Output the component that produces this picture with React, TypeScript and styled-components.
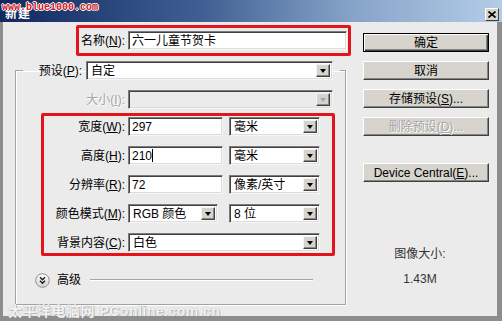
import React from "react";
import styled, { createGlobalStyle, css } from "styled-components";

const GlobalStyle = createGlobalStyle`
  html, body { margin: 0; padding: 0; background: #fff; }
  body {
    font-family: "Liberation Sans", "Noto Sans CJK SC", sans-serif;
    font-size: 12px;
    line-height: 14px;
    color: #000;
  }
  * { box-sizing: border-box; }
`;

const Window = styled.div`
  position: relative;
  width: 502px;
  height: 321px;
  overflow: hidden;
  display: flex;
  flex-direction: column;
  background: #ebebeb;
`;

const TitleBar = styled.div`
  height: 22px;
  flex: none;
  display: flex;
  align-items: flex-end;
  padding: 0 3px 1px 5px;
  background: linear-gradient(90deg, #10295e 0%, #3f5f92 40%, #86a3c8 70%, #b3cde8 100%);
`;

const Title = styled.span`
  align-self: center;
  margin-top: 6px;
  color: #fff;
  font-weight: bold;
  font-size: 12px;
  letter-spacing: 1px;
`;

const CloseButton = styled.span`
  margin-left: auto;
  width: 14px;
  height: 13px;
  background: #d6d3cc;
  border: 1px solid;
  border-color: #fff #404040 #404040 #fff;
  display: flex;
  align-items: center;
  justify-content: center;
`;

const TitleMark = styled.span`
  position: absolute;
  left: 2px;
  top: 1px;
  font-family: "Liberation Mono", monospace;
  font-weight: bold;
  font-size: 10px;
  color: #d4141c;
  text-shadow: 1px 0 0 #fff, -1px 0 0 #fff, 0 1px 0 #fff, 0 -1px 0 #fff;
`;

const FooterMark = styled.span`
  position: absolute;
  left: 8px;
  bottom: 2px;
  font-weight: bold;
  font-size: 14px;
  line-height: 16px;
  color: rgba(255, 255, 255, 0.9);
  text-shadow: 0 0 1px #9a9a9a, 1px 1px 0 rgba(140, 140, 140, 0.5);
  letter-spacing: 0.5px;
`;

const Frame = styled.div`
  flex: 1;
  display: flex;
  border-style: solid;
  border-color: #8d8d8d;
  border-width: 0 5px 5px 3px;
`;

const LeftPane = styled.div`
  width: 360px;
  flex: none;
  display: flex;
  flex-direction: column;
  align-items: flex-start;
`;

const RightPane = styled.div`
  flex: 1;
  display: flex;
  flex-direction: column;
  align-items: flex-start;
  padding-top: 11px;
  gap: 9px;
`;

const Highlight = styled.div<{ $ml: number; $mt: number; $w: number }>`
  margin: ${(p) => p.$mt}px 0 0 ${(p) => p.$ml}px;
  width: ${(p) => p.$w}px;
  border: 3px solid #e3141c;
  border-radius: 2px;
`;

const NameBox = styled(Highlight)`
  height: 31px;
  display: flex;
  align-items: center;
  gap: 3px;
`;

const FieldStack = styled(Highlight)`
  display: flex;
  flex-direction: column;
  gap: 10px;
  padding: 1px 0;
`;

const sunken = css`
  border: 1px solid;
  border-color: #7c7c7c #f6f6f6 #f6f6f6 #7c7c7c;
  box-shadow: inset 1px 1px 0 #404040, inset -1px -1px 0 #dcdcdc;
`;

const FieldRow = styled.div`
  display: flex;
  align-items: center;
  gap: 3px;
  height: 19px;
`;

const FieldPair = styled.div<{ $gap: number }>`
  display: flex;
  gap: ${(p) => p.$gap}px;
`;

const FieldLabel = styled.span<{ $w: number; $disabled?: boolean }>`
  width: ${(p) => p.$w}px;
  flex: none;
  text-align: right;
  white-space: nowrap;
  color: ${(p) => (p.$disabled ? "#a5a5a5" : "#000")};
  text-shadow: ${(p) => (p.$disabled ? "1px 1px 0 #fff" : "none")};
`;

const Key = styled.span`
  text-decoration: underline;
  text-underline-offset: 1px;
`;

const TextBox = styled.div<{ $w: number }>`
  ${sunken};
  width: ${(p) => p.$w}px;
  height: 19px;
  flex: none;
  background: #fff;
  padding: 0 3px;
  display: flex;
  align-items: center;
  white-space: nowrap;
`;

const Caret = styled.span`
  width: 1px;
  height: 13px;
  background: #000;
`;

const SelectBox = styled.div<{ $w: number; $disabled?: boolean }>`
  ${sunken};
  width: ${(p) => p.$w}px;
  height: 19px;
  flex: none;
  display: flex;
  padding: 2px;
  background: ${(p) => (p.$disabled ? "#ebebeb" : "#fff")};
`;

const SelectValue = styled.span`
  flex: 1;
  min-width: 0;
  display: flex;
  align-items: center;
  padding-left: 2px;
  white-space: nowrap;
`;

const ArrowButton = styled.span<{ $disabled?: boolean }>`
  width: 14px;
  flex: none;
  background: #d6d3cc;
  border: 1px solid;
  border-color: #f4f4f4 #404040 #404040 #f4f4f4;
  box-shadow: inset -1px -1px 0 #8a8a8a;
  display: flex;
  align-items: center;
  justify-content: center;

  &::after {
    content: "";
    border-left: 3.5px solid transparent;
    border-right: 3.5px solid transparent;
    border-top: 4px solid ${(p) => (p.$disabled ? "#a8a8a8" : "#000")};
  }
`;

const GroupBox = styled.fieldset`
  margin: 5px 0 0 12px;
  width: 331px;
  min-inline-size: 0;
  padding: 0 0 17px 0;
  border: 1px solid #a3a3a3;
  box-shadow: 1px 1px 0 #fff, inset 1px 1px 0 #fff;
`;

const GroupLegend = styled.legend`
  margin-left: 7px;
  padding: 0 7px 0 12px;
`;

const LegendRow = styled.div`
  display: flex;
  align-items: center;
  gap: 4px;
  height: 19px;
`;

const SizeRow = styled(FieldRow)`
  margin-top: 10px;
  margin-bottom: 4px;
`;

const AdvancedRow = styled.div`
  margin: 17px 32px 0 19px;
  height: 14px;
  display: flex;
  align-items: center;
  gap: 7px;
`;

const Rule = styled.span`
  flex: 1;
  margin-left: 2px;
  height: 2px;
  border-top: 1px solid #a3a3a3;
  border-bottom: 1px solid #fff;
`;

const DialogButton = styled.button<{ $default?: boolean; $mt?: number }>`
  width: 126px;
  height: 19px;
  margin-top: ${(p) => p.$mt ?? 0}px;
  padding: 0;
  font: inherit;
  font-size: 12px;
  line-height: 14px;
  color: #000;
  background: #d7d4cd;
  border: 1px solid;
  border-color: #fff #404040 #404040 #fff;
  box-shadow: inset -1px -1px 0 #858585;
  white-space: nowrap;

  ${(p) =>
    p.$default &&
    css`
      border-color: #000;
      box-shadow: inset 1px 1px 0 #fff, inset -1px -1px 0 #404040, inset -2px -2px 0 #858585;
    `}

  &:disabled {
    color: #a5a5a5;
    text-shadow: 1px 1px 0 #fff;
  }
`;

const InfoBlock = styled.div`
  margin-top: 56px;
  width: 114px;
  display: flex;
  flex-direction: column;
  align-items: center;
  gap: 11px;
  color: #333;
`;

const AdvancedIcon = () => (
  <svg width="15" height="15" viewBox="0 0 15 15">
    <defs>
      <linearGradient id="advFill" x1="0" y1="0" x2="0" y2="1">
        <stop offset="0" stopColor="#ffffff" />
        <stop offset="1" stopColor="#d2d2d2" />
      </linearGradient>
    </defs>
    <circle cx="7.5" cy="7.5" r="6.8" fill="url(#advFill)" stroke="#8c8c8c" />
    <path d="M5 4.2 L7.5 6.7 L10 4.2 M5 7.8 L7.5 10.3 L10 7.8" fill="none" stroke="#1a1a1a" strokeWidth="1.4" />
  </svg>
);

const Select = ({ w, value, disabled }: { w: number; value?: string; disabled?: boolean }) => (
  <SelectBox $w={w} $disabled={disabled}>
    <SelectValue>{value}</SelectValue>
    <ArrowButton $disabled={disabled} />
  </SelectBox>
);

const Label = ({ w, text, k, disabled }: { w: number; text: string; k: string; disabled?: boolean }) => (
  <FieldLabel $w={w} $disabled={disabled}>
    {text}(<Key>{k}</Key>):
  </FieldLabel>
);

export default function App() {
  return (
    <Window>
      <GlobalStyle />
      <TitleBar>
        <Title>新建</Title>
        <CloseButton>
          <svg width="8" height="7" viewBox="0 0 8 7">
            <path d="M0.5 0.5 L7.5 6.5 M7.5 0.5 L0.5 6.5" stroke="#000" strokeWidth="1.6" />
          </svg>
        </CloseButton>
      </TitleBar>
      <Frame>
        <LeftPane>
          <NameBox $ml={73} $mt={3} $w={275}>
            <Label w={46} text="名称" k="N" />
            <TextBox $w={219}>六一儿童节贺卡</TextBox>
          </NameBox>

          <GroupBox>
            <GroupLegend>
              <LegendRow>
                <Label w={47} text="预设" k="P" />
                <Select w={247} value="自定" />
              </LegendRow>
            </GroupLegend>

            <SizeRow>
              <Label w={109} text="大小" k="I" disabled />
              <Select w={205} disabled />
            </SizeRow>

            <FieldStack $ml={25} $mt={0} $w={294}>
              <FieldRow>
                <Label w={81} text="宽度" k="W" />
                <FieldPair $gap={6}>
                  <TextBox $w={95}>297</TextBox>
                  <Select w={91} value="毫米" />
                </FieldPair>
              </FieldRow>
              <FieldRow>
                <Label w={81} text="高度" k="H" />
                <FieldPair $gap={6}>
                  <TextBox $w={95}>
                    210
                    <Caret />
                  </TextBox>
                  <Select w={91} value="毫米" />
                </FieldPair>
              </FieldRow>
              <FieldRow>
                <Label w={81} text="分辨率" k="R" />
                <FieldPair $gap={6}>
                  <TextBox $w={95}>72</TextBox>
                  <Select w={91} value="像素/英寸" />
                </FieldPair>
              </FieldRow>
              <FieldRow>
                <Label w={81} text="颜色模式" k="M" />
                <FieldPair $gap={11}>
                  <Select w={90} value="RGB 颜色" />
                  <Select w={91} value="8 位" />
                </FieldPair>
              </FieldRow>
              <FieldRow>
                <Label w={81} text="背景内容" k="C" />
                <Select w={192} value="白色" />
              </FieldRow>
            </FieldStack>

            <AdvancedRow>
              <AdvancedIcon />
              <span>高级</span>
              <Rule />
            </AdvancedRow>
          </GroupBox>
        </LeftPane>

        <RightPane>
          <DialogButton $default>确定</DialogButton>
          <DialogButton>取消</DialogButton>
          <DialogButton>
            存储预设(<Key>S</Key>)...
          </DialogButton>
          <DialogButton disabled>
            删除预设(<Key>D</Key>)...
          </DialogButton>
          <DialogButton $mt={18}>
            Device Central(<Key>E</Key>)...
          </DialogButton>
          <InfoBlock>
            <span>图像大小:</span>
            <span>1.43M</span>
          </InfoBlock>
        </RightPane>
      </Frame>
      <TitleMark>www.blue1000.com</TitleMark>
      <FooterMark>太平洋电脑网 PConline.com.cn</FooterMark>
    </Window>
  );
}
